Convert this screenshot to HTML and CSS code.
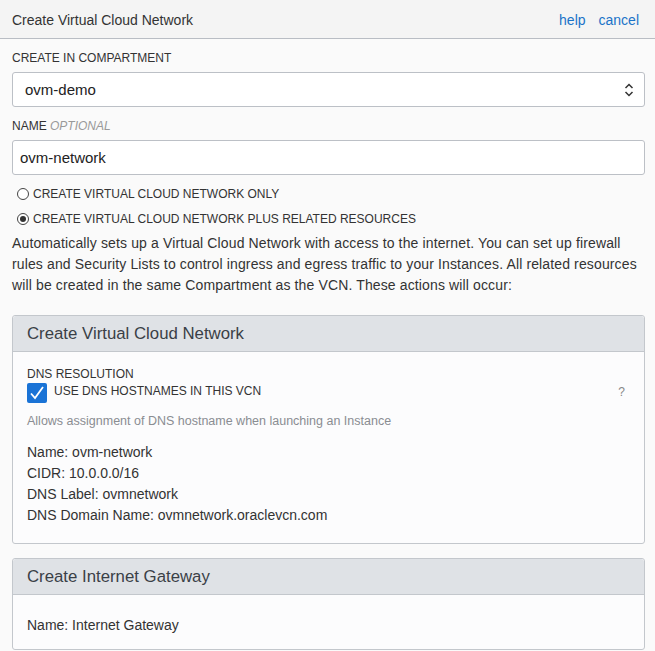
FILE: index.html
```html
<!DOCTYPE html>
<html>
<head>
<meta charset="utf-8">
<link rel="stylesheet" href="styles.css">
</head>
<body>
<div class="header">
  <div class="title">Create Virtual Cloud Network</div>
  <div class="links"><a>help</a><a>cancel</a></div>
</div>
<div class="content">
  <div class="label">CREATE IN COMPARTMENT</div>
  <div class="select">
    <span>ovm-demo</span>
    <svg class="chev" width="10" height="14" viewBox="0 0 10 14"><path d="M1.5 5 L5 1.5 L8.5 5 M1.5 9 L5 12.5 L8.5 9" fill="none" stroke="#333" stroke-width="1.5"/></svg>
  </div>
  <div class="label label2">NAME <em>OPTIONAL</em></div>
  <div class="input">ovm-network</div>
  <div class="radio r1"><span class="circ"></span>CREATE VIRTUAL CLOUD NETWORK ONLY</div>
  <div class="radio r2"><span class="circ on"></span>CREATE VIRTUAL CLOUD NETWORK PLUS RELATED RESOURCES</div>
  <p class="desc">Automatically sets up a Virtual Cloud Network with access to the internet. You can set up firewall rules and Security Lists to control ingress and egress traffic to your Instances. All related resources will be created in the same Compartment as the VCN. These actions will occur:</p>

  <div class="panel">
    <div class="phead">Create Virtual Cloud Network</div>
    <div class="pbody">
      <div class="small">DNS RESOLUTION</div>
      <div class="check-row">
        <span class="cbox"><svg width="20" height="20" viewBox="0 0 20 20"><path d="M4 10.5 L8 15 L16 4" fill="none" stroke="#fff" stroke-width="1.8"/></svg></span>
        <span class="clabel">USE DNS HOSTNAMES IN THIS VCN</span>
        <span class="q">?</span>
      </div>
      <div class="hint">Allows assignment of DNS hostname when launching an Instance</div>
      <div class="info">
        <div>Name: ovm-network</div>
        <div>CIDR: 10.0.0.0/16</div>
        <div>DNS Label: ovmnetwork</div>
        <div>DNS Domain Name: ovmnetwork.oraclevcn.com</div>
      </div>
    </div>
  </div>

  <div class="panel panel2">
    <div class="phead">Create Internet Gateway</div>
    <div class="pbody pbody2">
      <div class="info"><div>Name: Internet Gateway</div></div>
    </div>
  </div>
</div>
</body>
</html>
```

FILE: styles.css
```css
html, body {
  margin: 0;
  padding: 0;
  background: #fafafa;
  font-family: "Liberation Sans", Arial, sans-serif;
  color: #333;
}
.header {
  height: 38px;
  background: #f4f4f4;
  border-bottom: 1px solid #b9bdc4;
  display: flex;
  align-items: center;
  justify-content: space-between;
  padding: 0 16px 0 12px;
}
.title {
  font-size: 14px;
  color: #333;
  padding-top: 1px;
}
.links {
  display: flex;
  gap: 13px;
  font-size: 14px;
  padding-top: 1px;
}
.links a {
  color: #1a73c8;
}
.content {
  padding: 12px 10px 0 12px;
}
.label {
  font-size: 12px;
  color: #333;
  line-height: 14px;
}
.label em {
  color: #999;
  font-style: italic;
}
.select, .input {
  box-sizing: border-box;
  height: 35px;
  border: 1px solid #bcc0c6;
  border-radius: 3px;
  background: #fff;
  font-size: 15px;
  color: #222;
  display: flex;
  align-items: center;
  margin-top: 7px;
}
.select {
  justify-content: space-between;
  padding: 0 10px 0 12px;
}
.label2 {
  margin-top: 12px;
}
.input {
  padding-left: 7px;
}
.radio {
  font-size: 12px;
  color: #333;
  display: flex;
  align-items: center;
  padding-left: 5px;
  line-height: 14px;
}
.r1 { margin-top: 12px; }
.r2 { margin-top: 11px; }
.circ {
  box-sizing: border-box;
  width: 12px;
  height: 12px;
  border: 1px solid #444;
  border-radius: 50%;
  background: #fff;
  margin-right: 4px;
  position: relative;
}
.circ.on::after {
  content: "";
  position: absolute;
  left: 2px;
  top: 2px;
  width: 6px;
  height: 6px;
  border-radius: 50%;
  background: #333;
}
.desc {
  margin: 7px 0 0 0;
  font-size: 14px;
  line-height: 21px;
  letter-spacing: 0.13px;
  color: #333;
}
.panel {
  margin-top: 19px;
  border: 1px solid #c3c7cc;
  border-radius: 3px;
  background: #fcfcfd;
}
.panel2 {
  margin-top: 14px;
}
.phead {
  height: 35px;
  background: #dfe2e6;
  border-bottom: 1px solid #c3c7cc;
  font-size: 16.8px;
  color: #3a3f47;
  display: flex;
  align-items: center;
  padding-left: 14px;
  border-radius: 3px 3px 0 0;
}
.pbody {
  padding: 15px 14px 17px 14px;
}
.pbody2 {
  padding: 20px 14px 13px 14px;
}
.small {
  font-size: 12px;
  line-height: 14px;
  color: #333;
}
.check-row {
  display: flex;
  align-items: flex-start;
  margin-top: 2px;
}
.cbox {
  width: 20px;
  height: 20px;
  background: #1a73d6;
  border-radius: 2px;
  display: block;
}
.cbox svg { display: block; }
.clabel {
  font-size: 12px;
  margin-left: 7px;
  line-height: 14px;
  margin-top: 1px;
  flex: 1;
}
.q {
  font-size: 12px;
  color: #888;
  margin-right: 5px;
  line-height: 14px;
  margin-top: 2px;
}
.hint {
  font-size: 12.5px;
  color: #8a8d92;
  margin-top: 11px;
  line-height: 14px;
}
.info {
  font-size: 14px;
  line-height: 21px;
  color: #333;
}
.hint + .info {
  margin-top: 14px;
}
```
